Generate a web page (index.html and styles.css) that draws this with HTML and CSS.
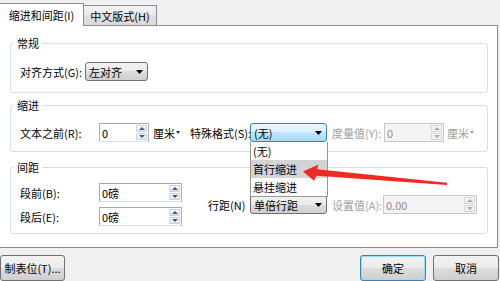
FILE: index.html
```html
<!DOCTYPE html>
<html lang="zh-CN">
<head>
<meta charset="utf-8">
<title>段落</title>
<link rel="stylesheet" href="styles.css">
</head>
<body>
<div class="dialog">
  <div class="tabs">
    <div class="tab active">缩进和间距(I)</div>
    <div class="tab">中文版式(H)</div>
  </div>
  <div class="panel">
    <fieldset class="group g1">
      <legend>常规</legend>
      <div class="row">
        <span class="lbl w65">对齐方式(G):</span>
        <div class="combo w63"><span>左对齐</span><svg class="caret" width="7" height="4" viewBox="0 0 7 4"><path d="M0 0h7L3.5 4z"/></svg></div>
      </div>
    </fieldset>
    <fieldset class="group g2">
      <legend>缩进</legend>
      <div class="row">
        <span class="lbl w79">文本之前(R):</span>
        <div class="spin w50"><span>0</span><div class="btns"><span class="sb up"></span><span class="sb down"></span></div></div>
        <span class="unit ml4 w27">厘米<i class="mini"></i></span>
        <span class="lbl ml10 w60">特殊格式(S):</span>
        <div class="combo focus w77"><span>(无)</span><svg class="caret" width="7" height="4" viewBox="0 0 7 4"><path d="M0 0h7L3.5 4z"/></svg></div>
        <span class="lbl ml5 w52 dis">度量值(Y):</span>
        <div class="spin dis w60"><span>0</span><div class="btns"><span class="sb up"></span><span class="sb down"></span></div></div>
        <span class="unit ml3 dis">厘米<i class="mini"></i></span>
      </div>
    </fieldset>
    <fieldset class="group g3">
      <legend>间距</legend>
      <div class="row3">
        <div class="col">
          <div class="row">
            <span class="lbl w79">段前(B):</span>
            <div class="spin w83"><span>0磅</span><div class="btns"><span class="sb up"></span><span class="sb down"></span></div></div>
          </div>
          <div class="row">
            <span class="lbl w79">段后(E):</span>
            <div class="spin w83"><span>0磅</span><div class="btns"><span class="sb up"></span><span class="sb down"></span></div></div>
          </div>
        </div>
        <span class="lbl ml26 w42">行距(N)</span>
        <div class="combo w77"><span>单倍行距</span><svg class="caret" width="7" height="4" viewBox="0 0 7 4"><path d="M0 0h7L3.5 4z"/></svg></div>
        <span class="lbl ml5 w51 dis">设置值(A):</span>
        <div class="spin dis w94"><span>0.00</span><div class="btns"><span class="sb up"></span><span class="sb down"></span></div></div>
      </div>
    </fieldset>
  </div>
  <div class="footer">
    <button class="btn first">制表位(T)...</button>
    <button class="btn default">确定</button>
    <button class="btn">取消</button>
  </div>

  <div class="list">
    <div class="item">(无)</div>
    <div class="item hl">首行缩进</div>
    <div class="item">悬挂缩进</div>
  </div>

  <svg class="arrow" width="500" height="281" viewBox="0 0 500 281">
    <polygon points="303,171.5 318.5,164.5 317,169.3 447,182.8 447,185 316.5,175.8 314,180.8" fill="#ee2a24"/>
  </svg>
</div>
</body>
</html>
```

FILE: styles.css
```css
* { box-sizing: border-box; }
html, body { margin: 0; padding: 0; }
body {
  width: 500px;
  height: 281px;
  overflow: hidden;
  background: #f0f0f0;
  font-family: "Noto Sans CJK SC", "Microsoft YaHei", sans-serif;
  font-size: 11px;
  line-height: 14px;
  color: #000;
}
.dialog { position: relative; width: 500px; height: 281px; }

/* tabs */
.tabs { display: flex; align-items: flex-end; height: 25px; }
.tab {
  width: 73px;
  height: 20px;
  border: 1px solid #898c95;
  border-left: none;
  border-bottom: none;
  background: linear-gradient(#f3f3f3, #ebebeb 50%, #e1e1e1 50%, #d9d9d9);
  display: flex;
  align-items: center;
  justify-content: center;
}
.tab.active {
  position: relative;
  z-index: 1;
  width: 84px;
  height: 23px;
  margin-bottom: -1px;
  background: #fff;
}

/* panel */
.panel {
  width: 498px;
  background: #fff;
  border: 1px solid #898c95;
  border-left: none;
  padding: 10px 9px 13px 10px;
}
.group {
  margin: 0;
  min-width: 0;
  border: 1px solid #d5dfe5;
  border-radius: 3px;
}
.group legend {
  padding: 0 3px;
  margin-left: -6px;
  height: 14px;
  line-height: 14px;
}
.g1 { padding: 12px 9px 11px; }
.g2 { margin-top: 5px; padding: 11px 9px 9px; }
.g3 { margin-top: 8px; padding: 9px 9px 7px; }

.row { display: flex; align-items: center; height: 19px; }
.row3 { display: flex; align-items: center; }
.col { display: flex; flex-direction: column; gap: 5px; }

.lbl { white-space: nowrap; flex: none; }
.dis { color: #a0a0a0; }

.w27 { width: 27px; } .w42 { width: 42px; } .w50 { width: 50px; }
.w51 { width: 51px; } .w52 { width: 52px; } .w60 { width: 60px; }
.w63 { width: 63px; } .w65 { width: 65px; } .w77 { width: 77px; }
.w79 { width: 79px; } .w83 { width: 83px; } .w94 { width: 94px; }
.ml3 { margin-left: 3px; } .ml4 { margin-left: 4px; } .ml5 { margin-left: 5px; }
.ml10 { margin-left: 10px; } .ml26 { margin-left: 26px; }

/* combo box */
.combo {
  flex: none;
  height: 19px;
  border: 1px solid #707070;
  border-radius: 3px;
  background: linear-gradient(#f2f2f2, #ebebeb 50%, #dddddd 50%, #cfcfcf);
  display: flex;
  align-items: center;
  padding: 0 4px 0 3px;
  white-space: nowrap;
}
.combo.focus {
  border-color: #3c7fb1;
  background: linear-gradient(#eaf6fd, #d9f0fc 50%, #bee6fd 50%, #a7d9f5);
}
.caret { margin-left: auto; fill: #000; flex: none; }

/* spin box */
.spin {
  flex: none;
  height: 19px;
  border: 1px solid #abadb3;
  border-top-color: #a3a6ad;
  border-bottom-color: #dbdfe6;
  background: #fff;
  display: flex;
  align-items: center;
  padding: 0 1px 0 2px;
  white-space: nowrap;
}
.spin.dis { background: #f4f4f4; border-color: #c8c8c8; color: #8d8d8d; }
.btns {
  margin-left: auto;
  width: 11px;
  height: 15px;
  display: flex;
  flex-direction: column;
  gap: 1px;
}
.sb {
  flex: 1;
  border: 1px solid #c9d1db;
  border-radius: 1px;
  background: linear-gradient(#f7f9fb, #e4e9ef);
  display: flex;
  align-items: center;
  justify-content: center;
}
.sb::before {
  content: "";
  width: 0;
  height: 0;
  border-left: 3px solid transparent;
  border-right: 3px solid transparent;
}
.sb.up::before { border-bottom: 3px solid #3d5a86; }
.sb.down::before { border-top: 3px solid #3d5a86; }
.spin.dis .sb { border-color: #d6d6d6; background: linear-gradient(#fafafa, #ececec); }
.spin.dis .sb.up::before { border-bottom-color: #a8a8a8; }
.spin.dis .sb.down::before { border-top-color: #a8a8a8; }

/* unit */
.unit { flex: none; display: flex; align-items: center; white-space: nowrap; }
.mini {
  margin-left: 1px;
  width: 0;
  height: 0;
  border-left: 2.5px solid transparent;
  border-right: 2.5px solid transparent;
  border-top: 3px solid #333;
}
.unit.dis .mini { border-top-color: #a0a0a0; }

/* footer */
.footer {
  display: flex;
  gap: 7px;
  height: 33px;
  padding: 7px 1px 0 0;
}
.btn {
  flex: none;
  width: 66px;
  height: 26px;
  border: 1px solid #707070;
  border-radius: 3px;
  background: linear-gradient(#f2f2f2, #ebebeb 50%, #dddddd 50%, #cfcfcf);
  font: inherit;
  color: #000;
  padding: 0;
}
.btn.first { width: 65px; margin-right: auto; }
.btn.default {
  border-color: #3c7fb1;
  box-shadow: inset 0 0 0 1px #9edcf7;
}

/* dropdown list overlay */
.list {
  position: absolute;
  left: 250px;
  top: 142px;
  width: 78px;
  height: 55px;
  background: #fff;
  border: 1px solid #979797;
  border-top: none;
  z-index: 2;
}
.item { height: 18px; line-height: 18px; padding-left: 2px; white-space: nowrap; }
.item.hl { background: #d4d4d4; }

.arrow { position: absolute; left: 0; top: 0; z-index: 3; pointer-events: none; }
```
